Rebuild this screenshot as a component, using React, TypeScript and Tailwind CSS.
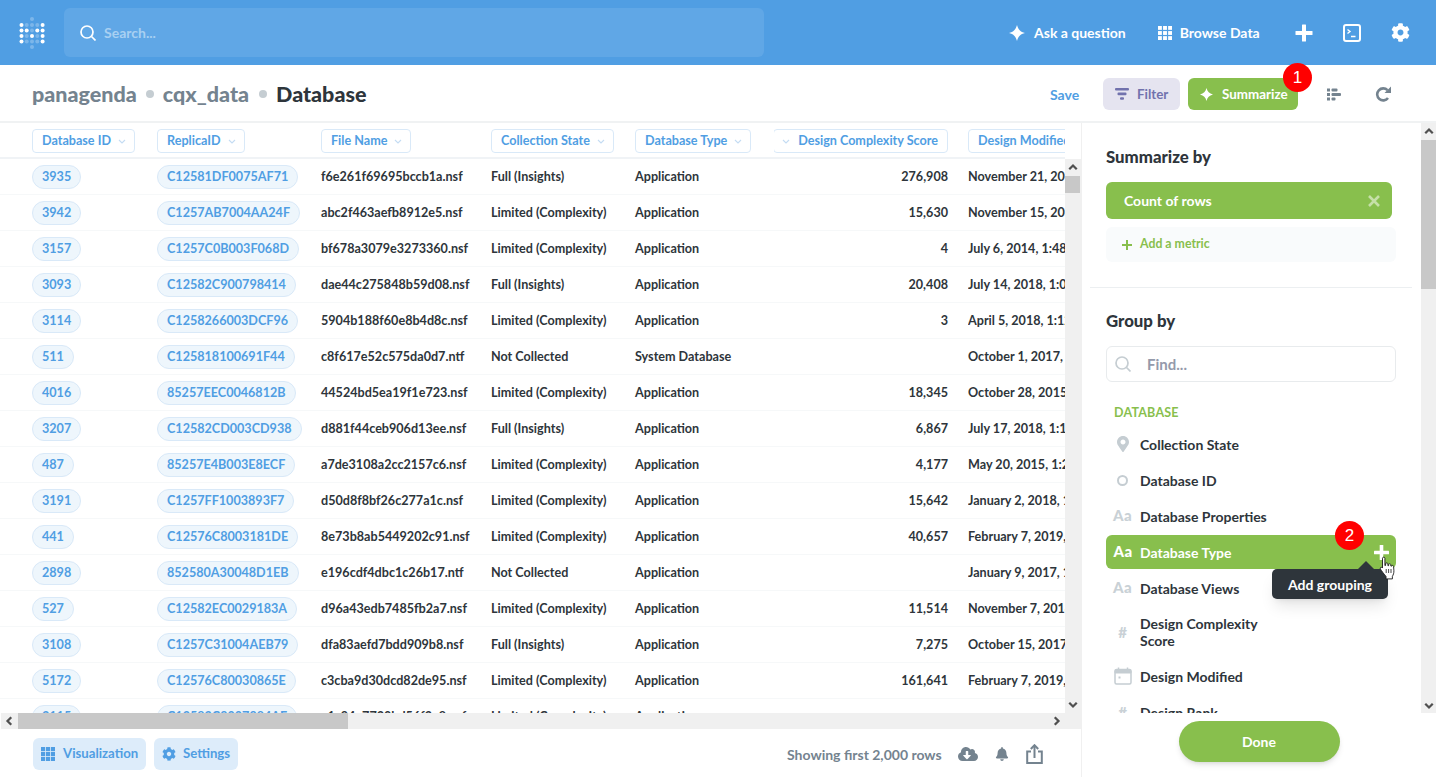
import React from "react";
import { FaCog, FaBell, FaMapMarkerAlt, FaCloudDownloadAlt } from "react-icons/fa";

const rows: string[][] = [
  ["3935","C12581DF0075AF71","f6e261f69695bccb1a.nsf","Full (Insights)","Application","276,908","November 21, 2017, 1:48 AM"],
  ["3942","C1257AB7004AA24F","abc2f463aefb8912e5.nsf","Limited (Complexity)","Application","15,630","November 15, 2017, 1:48 AM"],
  ["3157","C1257C0B003F068D","bf678a3079e3273360.nsf","Limited (Complexity)","Application","4","July 6, 2014, 1:48 AM"],
  ["3093","C12582C900798414","dae44c275848b59d08.nsf","Full (Insights)","Application","20,408","July 14, 2018, 1:08 AM"],
  ["3114","C1258266003DCF96","5904b188f60e8b4d8c.nsf","Limited (Complexity)","Application","3","April 5, 2018, 1:12 AM"],
  ["511","C125818100691F44","c8f617e52c575da0d7.ntf","Not Collected","System Database","","October 1, 2017, 1:12 AM"],
  ["4016","85257EEC0046812B","44524bd5ea19f1e723.nsf","Limited (Complexity)","Application","18,345","October 28, 2015, 1:12 AM"],
  ["3207","C12582CD003CD938","d881f44ceb906d13ee.nsf","Full (Insights)","Application","6,867","July 17, 2018, 1:12 AM"],
  ["487","85257E4B003E8ECF","a7de3108a2cc2157c6.nsf","Limited (Complexity)","Application","4,177","May 20, 2015, 1:28 AM"],
  ["3191","C1257FF1003893F7","d50d8f8bf26c277a1c.nsf","Limited (Complexity)","Application","15,642","January 2, 2018, 1:12 AM"],
  ["441","C12576C8003181DE","8e73b8ab5449202c91.nsf","Limited (Complexity)","Application","40,657","February 7, 2019, 1:12 AM"],
  ["2898","852580A30048D1EB","e196cdf4dbc1c26b17.ntf","Not Collected","Application","","January 9, 2017, 1:12 AM"],
  ["527","C12582EC0029183A","d96a43edb7485fb2a7.nsf","Limited (Complexity)","Application","11,514","November 7, 2018, 1:12 AM"],
  ["3108","C1257C31004AEB79","dfa83aefd7bdd909b8.nsf","Full (Insights)","Application","7,275","October 15, 2017, 1:12 AM"],
  ["5172","C12576C80030865E","c3cba9d30dcd82de95.nsf","Limited (Complexity)","Application","161,641","February 7, 2019, 1:12 AM"],
  ["3115","C12582C9007984AE","a1c94e7730bd56f2e8.nsf","Limited (Complexity)","Application","",""],
];

const grid = "grid grid-cols-[157px_164px_170px_144px_139px_194px_97px]";

const Star = ({ s = 16, c = "#fff" }: { s?: number; c?: string }) => (
  <svg width={s} height={s} viewBox="0 0 16 16" fill={c}><path d="M8 0C9.2 4.6 11.4 6.8 16 8 11.4 9.2 9.2 11.4 8 16 6.8 11.4 4.6 9.2 0 8 4.6 6.8 6.8 4.6 8 0Z" /></svg>
);
const Chev = ({ d = "down", c = "#c4dcf3", s = 8 }: { d?: string; c?: string; s?: number }) => {
  const p: Record<string, string> = { down: "M1 3l3 3 3-3", up: "M1 5l3-3 3 3", left: "M5 1L2 4l3 3", right: "M3 1l3 3-3 3" };
  return <svg width={s} height={s} viewBox="0 0 8 8" fill="none" stroke={c} strokeWidth={s > 8 ? 1.8 : 1.1}><path d={p[d]} /></svg>;
};
const Logo = () => {
  const xs = [21.5, 26.7, 32, 37.3, 42.6];
  const ys = [25, 30.4, 36, 41.6];
  const on = [[1,0,0,0,1],[1,1,0,1,1],[1,0,1,0,1],[1,0,0,0,1]];
  return (
    <svg width="32" height="36" viewBox="16 15 32 36" className="shrink-0">
      <circle cx={32} cy={19} r={2} fill="#fff" opacity={0.25} />
      <circle cx={32} cy={47} r={2} fill="#fff" opacity={0.25} />
      {ys.map((y, i) => xs.map((x, j) => <circle key={`${i}${j}`} cx={x} cy={y} r={2} fill="#fff" opacity={on[i][j] ? 1 : 0.25} />))}
    </svg>
  );
};
const Grid3 = ({ s = 14, c = "#fff", gap = 1.2 }: { s?: number; c?: string; gap?: number }) => {
  const w = (14 - 2 * gap) / 3;
  return (
    <svg width={s} height={s} viewBox="0 0 14 14" fill={c}>
      {[0, 1, 2].map((i) => [0, 1, 2].map((j) => <rect key={`${i}${j}`} x={i * (w + gap)} y={j * (w + gap)} width={w} height={w} />))}
    </svg>
  );
};
const Search = ({ c, s = 16 }: { c: string; s?: number }) => (
  <svg width={s} height={s} viewBox="0 0 16 16" fill="none" stroke={c} strokeWidth="1.7"><circle cx="7" cy="7" r="6" /><path d="M11.5 11.5L15.5 15.5" /></svg>
);

const Row = ({ icon, label, wrap }: { icon: React.ReactNode; label: string; wrap?: boolean }) => (
  <div className={`flex items-center w-[290px] mb-[2px] text-[14px] font-bold text-[#2e353b] ${wrap ? "h-[50px] leading-[17px]" : "h-[34px]"}`}>
    <div className="w-[34px] flex justify-center pr-[1px] shrink-0">{icon}</div>
    <div className={wrap ? "w-[135px]" : ""}>{label}</div>
  </div>
);
const Aa = ({ c = "#c9d1d6" }: { c?: string }) => <span className="text-[15px] font-black tracking-[0.5px] leading-none -mt-[2px]" style={{ color: c }}>Aa</span>;

export default function App() {
  return (
    <div className="h-[777px] w-[1436px] overflow-hidden flex flex-col bg-white font-['Lato',sans-serif]">
      {/* top nav */}
      <div className="h-[65px] shrink-0 bg-[#509ee3] flex items-center">
        <div className="w-[64px] flex justify-center shrink-0"><Logo /></div>
        <div className="w-[700px] h-[49px] rounded-md bg-[#60a7e6] flex items-center pl-[16px] gap-[8px]">
          <Search c="#fff" />
          <span className="text-[14px] font-bold text-[#a8d0f2]">Search...</span>
        </div>
        <div className="flex-1 flex items-center text-white text-[14px] font-bold">
          <div className="ml-[245px] flex items-center gap-[9px]"><Star /><span>Ask a question</span></div>
          <div className="ml-[32px] flex items-center gap-[8px]"><Grid3 /><span>Browse Data</span></div>
          <div className="ml-[35px]">
            <svg width="18" height="18" viewBox="0 0 18 18" fill="#fff"><rect x="7" y="0.5" width="4" height="17" rx="0.5" /><rect x="0.5" y="7" width="17" height="4" rx="0.5" /></svg>
          </div>
          <div className="ml-[30px]">
            <svg width="18" height="18" viewBox="0 0 18 18" fill="none" stroke="#fff"><rect x="1" y="1" width="16" height="16" rx="2" strokeWidth="2" /><path d="M4.5 5.5L7 7.5 4.5 9.5M8 12.5h4.5" strokeWidth="1.4" /></svg>
          </div>
          <div className="ml-[30px]"><FaCog size={19} color="#fff" /></div>
        </div>
      </div>

      {/* question bar */}
      <div className="h-[58px] shrink-0 border-b-2 border-[#f0f2f3] pt-[2px] flex items-center">
        <div className="pl-[32px] flex items-center text-[21.5px] font-black text-[#74838f] w-[1050px]">
          <span>panagenda</span>
          <span className="w-[8px] h-[8px] rounded-full bg-[#c5cdd2] ml-[9px] mr-[9px]" />
          <span>cqx_data</span>
          <span className="w-[8px] h-[8px] rounded-full bg-[#c5cdd2] ml-[10px] mr-[9px]" />
          <span className="text-[#2e353b]">Database</span>
        </div>
        <span className="text-[14px] font-bold text-[#509ee3] w-[53px]">Save</span>
        <div className="w-[77px] h-[32px] rounded-md bg-[#e5e4f0] text-[#7172ad] text-[13.4px] font-bold flex items-center pl-[12px] gap-[8px]">
          <svg width="14" height="12" viewBox="0 0 14 12" fill="#7172ad"><rect width="14" height="2.6" rx="1" /><rect x="2.5" y="4.6" width="9" height="2.6" rx="1" /><rect x="5" y="9.2" width="4" height="2.6" rx="1" /></svg>
          <span>Filter</span>
        </div>
        <div className="relative ml-[8px] w-[110px] h-[32px] rounded-md bg-[#88bf4d] text-white text-[13.4px] font-bold flex items-center pl-[12px] gap-[9px]">
          <Star s={13} />
          <span>Summarize</span>
          <div className="absolute -top-[15px] -right-[14px] w-[29px] h-[29px] rounded-full bg-[#ff0000] flex items-center justify-center text-white text-[17px] font-normal font-['Liberation_Sans',sans-serif]">1</div>
        </div>
        <div className="ml-[29px]">
          <svg width="14" height="13" viewBox="0 0 14 13" fill="#74838f"><rect y="0.5" width="3" height="3" /><rect x="4.5" y="0.5" width="6" height="3" rx="1" /><rect y="5" width="3" height="3" /><rect x="4.5" y="5" width="9.5" height="3" rx="1" /><rect y="9.5" width="3" height="3" /><rect x="4.5" y="9.5" width="4" height="3" rx="1" /></svg>
        </div>
        <div className="ml-[34px]">
          <svg width="17" height="16" viewBox="0 0 17 16" fill="none"><path d="M12.5 4.2A6 6 0 1 0 13 12" stroke="#74838f" strokeWidth="2.6" /><path d="M16 0.5V7H9.5Z" fill="#74838f" /></svg>
        </div>
      </div>

      <div className="flex-1 flex min-h-0">
        {/* left main */}
        <div className="w-[1082px] shrink-0 border-r border-[#f0f0f0] flex flex-col">
          <div className="h-[590px] flex flex-col overflow-hidden shrink-0">
            <div className={`${grid} w-[1065px] h-[36px] pt-[2px] items-center border-b-2 border-[#f0f3f6] overflow-hidden shrink-0 text-[12.6px] font-bold text-[#509ee3]`}>
              {["Database ID","ReplicaID","File Name","Collection State","Database Type","Design Complexity Score","Design Modified"].map((h, i) => (
                <div key={h} className={`flex overflow-hidden ${i === 0 ? "pl-[32px]" : ""} ${i === 5 ? "justify-end pr-[20px]" : ""}`}>
                  <div className={`h-[24px] rounded-[4px] border border-[#d9e9f8] flex items-center whitespace-nowrap shrink-0 ${i === 5 ? "pl-[8px] pr-[9px] gap-[8px]" : "pl-[9px] pr-[8px] gap-[7px]"}`}>
                    {i === 5 && <Chev />}
                    <span>{h}</span>
                    {i !== 5 && <Chev />}
                  </div>
                </div>
              ))}
            </div>
            <div className="flex flex-1 min-h-0">
              <div className="w-[1065px] h-[554px] overflow-hidden">
                {rows.map((r) => (
                  <div key={r[0]} className={`${grid} h-[36px] pt-[1px] items-center border-b border-[#f6f8f9] text-[12.6px] font-bold text-[#2e353b] whitespace-nowrap`}>
                    <div className="pl-[32px] flex"><span className="h-[24px] px-[9px] rounded-full bg-[#eef6fc] border border-[#d9e9f8] text-[#509ee3] flex items-center">{r[0]}</span></div>
                    <div className="flex"><span className="h-[24px] px-[9px] rounded-full bg-[#eef6fc] border border-[#d9e9f8] text-[#509ee3] flex items-center">{r[1]}</span></div>
                    <div>{r[2]}</div>
                    <div>{r[3]}</div>
                    <div>{r[4]}</div>
                    <div className="text-right pr-[20px]">{r[5]}</div>
                    <div className="overflow-hidden">{r[6]}</div>
                  </div>
                ))}
              </div>
              <div className="w-[16px] bg-[#f0f0f0] flex flex-col items-center shrink-0 pr-[1px]">
                <div className="h-[17px] flex items-center justify-center"><Chev d="up" c="#505050" s={10} /></div>
                <div className="h-[17px] w-full bg-[#c8c8c8]" />
                <div className="flex-1" />
                <div className="h-[17px] flex items-center justify-center mb-[1px]"><Chev d="down" c="#505050" s={10} /></div>
              </div>
            </div>
          </div>
          {/* horizontal scrollbar */}
          <div className="h-[16px] flex shrink-0 bg-[#f0f0f0] ml-[1px] items-stretch">
            <div className="w-[17px] flex items-center justify-center"><Chev d="left" c="#505050" s={10} /></div>
            <div className="w-[330px] bg-[#c8c8c8]" />
            <div className="w-[713px] flex items-center justify-end"><Chev d="right" c="#505050" s={10} /></div>
          </div>
          {/* footer */}
          <div className="flex-1 flex items-center pl-[33px] font-bold">
            <div className="w-[113px] h-[32px] mt-[2px] rounded-md bg-[#ddecfa] text-[#509ee3] flex items-center pl-[8px] gap-[8px] text-[13.2px]">
              <Grid3 c="#509ee3" gap={0.8} />
              <span>Visualization</span>
            </div>
            <div className="w-[84px] h-[32px] mt-[2px] ml-[8px] rounded-md bg-[#ddecfa] text-[#509ee3] flex items-center pl-[8px] gap-[7px] text-[13.2px]">
              <FaCog size={14} color="#509ee3" />
              <span>Settings</span>
            </div>
            <span className="ml-[549px] text-[14px] text-[#74838f] mt-[2px]">Showing first 2,000 rows</span>
            <div className="ml-[16px] mt-[2px]"><FaCloudDownloadAlt size={20} color="#74838f" /></div>
            <div className="ml-[17px] mt-[2px]"><FaBell size={14} color="#74838f" /></div>
            <div className="ml-[17px] mt-[2px]">
              <svg width="17" height="20" viewBox="0 0 17 20" fill="none" stroke="#74838f" strokeWidth="2"><path d="M5 7.5H1.2V19h14.6V7.5H12" /><path d="M8.5 14V1.5" /><path d="M4.8 5L8.5 1.2 12.2 5" /></svg>
            </div>
          </div>
        </div>

        {/* sidebar */}
        <div className="flex-1 flex flex-col min-w-0">
          <div className="h-[590px] flex shrink-0">
            <div className="w-[339px] pt-[24px] overflow-hidden">
              <div className="pl-[24px]">
                <div className="text-[16.8px] leading-[20px] font-black text-[#2e353b]">Summarize by</div>
                <div className="mt-[15px] w-[286px] h-[37px] rounded-md bg-[#88bf4d] flex items-center justify-between pl-[18px] pr-[12px] text-white text-[14px] font-bold">
                  <span>Count of rows</span>
                  <svg width="12" height="12" viewBox="0 0 12 12" stroke="#c6e0a8" strokeWidth="2.6"><path d="M1 1l10 10M11 1L1 11" /></svg>
                </div>
                <div className="mt-[8px] w-[290px] h-[35px] rounded-md bg-[#f9fbfc] flex items-center pl-[16px] gap-[8px] text-[#88bf4d] text-[12.3px] font-bold">
                  <svg width="10" height="10" viewBox="0 0 10 10" fill="#88bf4d"><rect x="4" width="2" height="10" /><rect y="4" width="10" height="2" /></svg>
                  <span>Add a metric</span>
                </div>
              </div>
              <div className="ml-[8px] mt-[25px] h-px bg-[#eceff1] w-[322px]" />
              <div className="pl-[24px]">
                <div className="mt-[23px] text-[16.8px] leading-[20px] font-black text-[#2e353b]">Group by</div>
                <div className="mt-[15px] w-[290px] h-[36px] rounded-md border border-[#e8ebed] flex items-center pl-[8px] gap-[16px]">
                  <Search c="#c5cdd2" />
                  <span className="text-[15px] font-bold text-[#949aab]">Find...</span>
                </div>
                <div className="mt-[24px] pl-[8px] text-[12.5px] tracking-[0.2px] leading-[14px] font-bold text-[#88bf4d]">DATABASE</div>
                <div className="mt-[7px]">
                  <Row icon={<FaMapMarkerAlt size={16} color="#c5cdd2" />} label="Collection State" />
                  <Row icon={<span className="block w-[11px] h-[11px] rounded-full border-2 border-[#c5cdd2]" />} label="Database ID" />
                  <Row icon={<Aa />} label="Database Properties" />
                  <div className="relative w-[290px] h-[34px] mb-[2px] rounded-md bg-[#88bf4d] flex items-center text-[14px] font-bold text-white">
                    <div className="w-[34px] flex justify-center shrink-0"><Aa c="#fff" /></div>
                    <div>Database Type</div>
                    <div className="absolute -top-[14px] left-[229px] w-[29px] h-[29px] rounded-full bg-[#ff0000] flex items-center justify-center text-white text-[17px] font-normal font-['Liberation_Sans',sans-serif]">2</div>
                    <div className="absolute left-[268px] top-[10px]">
                      <svg width="15" height="15" viewBox="0 0 15 15" fill="#fff"><rect x="5.7" width="3.6" height="15" rx="0.5" /><rect y="5.7" width="15" height="3.6" rx="0.5" /></svg>
                    </div>
                    <div className="absolute left-[166px] top-[34px] w-[116px] h-[30px] rounded-[5px] bg-[#2e353b] shadow-lg flex items-center justify-center text-[14px] z-10">
                      <div className="absolute -top-[8px] left-[86px] w-0 h-0 border-x-[8px] border-x-transparent border-b-[8px] border-b-[#2e353b]" />
                      Add grouping
                    </div>
                    <div className="absolute left-[273px] top-[21px] z-20">
                      <svg width="18" height="24" viewBox="0 0 18 24" fill="#fff" stroke="#1a1a1a" strokeWidth="0.9" strokeLinejoin="round"><path d="M3.5 2.2c0-1.4 2.4-1.4 2.4 0v7.4l0.7-.2v-1.6c0-1.2 2.2-1.2 2.3 0v1.8l.7.1V8.6c0-1.1 2.1-1.1 2.2.1v1.3l.7.2c0-1.1 2-1 2.1.2l.3 4.3c.1 2.2-.6 4.2-1.5 5.6v2.6H7v-2.5c-1.2-1.2-4.6-5.7-5.6-7.4-.8-1.3.8-2.3 1.8-1.3l.3.3z" /><path d="M7.2 13v4M9.6 13v4M12 13v4" strokeWidth="0.8" /></svg>
                    </div>
                  </div>
                  <Row icon={<Aa />} label="Database Views" />
                  <Row wrap icon={<span className="text-[15px] font-black text-[#c9d1d6]">#</span>} label="Design Complexity Score" />
                  <Row icon={
                    <svg width="18" height="18" viewBox="0 0 18 18" fill="none" stroke="#c5cdd2"><rect x="1" y="2.5" width="16" height="14.5" rx="1.5" strokeWidth="1.5" /><path d="M1 3.5h16v2.5H1z" fill="#c5cdd2" /><rect x="4.5" y="9.5" width="2" height="2" fill="#c5cdd2" strokeWidth="0" /><path d="M4.5 0.5v2M13.5 0.5v2" strokeWidth="1.5" /></svg>
                  } label="Design Modified" />
                  <Row icon={<span className="text-[15px] font-black text-[#c9d1d6]">#</span>} label="Design Rank" />
                </div>
              </div>
            </div>
            <div className="flex-1 bg-[#f0f0f0] flex flex-col items-center">
              <div className="h-[17px] flex items-center justify-center"><Chev d="up" c="#505050" s={10} /></div>
              <div className="h-[149px] w-full bg-[#c8c8c8]" />
              <div className="flex-1" />
              <div className="h-[17px] flex items-center justify-center"><Chev d="down" c="#505050" s={10} /></div>
            </div>
          </div>
          <div className="flex-1 flex justify-center pt-[8px]">
            <div className="w-[161px] h-[41px] rounded-full bg-[#88bf4d] shadow-md flex items-center justify-center text-white text-[14px] font-bold">Done</div>
          </div>
        </div>
      </div>
    </div>
  );
}
